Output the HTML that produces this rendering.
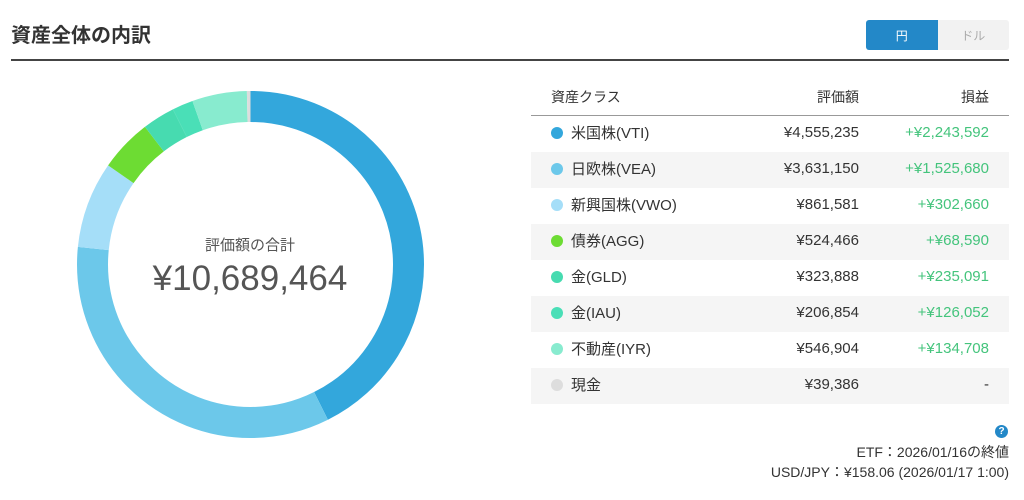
<!DOCTYPE html>
<html><head><meta charset="utf-8"><style>
*{box-sizing:border-box}
body{margin:0;width:1024px;height:500px;background:#fff;font-family:"Liberation Sans","Noto Sans CJK JP",sans-serif;color:#333;position:relative;overflow:hidden}
.t{position:absolute;left:11px;top:19px;font-size:20px;font-weight:bold;color:#333}
.hr{position:absolute;left:11px;top:59px;width:998px;height:2px;background:#444}
.tg{position:absolute;left:866px;top:20px;width:143px;height:30px;display:flex;font-size:12px;border-radius:3px;overflow:hidden}
.tg div{flex:1;display:flex;align-items:center;justify-content:center}
.tb{position:absolute;left:531px;top:80px;width:478px;font-size:15px}
.r{height:36px;display:flex;align-items:center;position:relative}
.r.g{background:#f5f5f5}
.c1{width:180px;padding-left:20px;display:flex;align-items:center}
.c2{width:148px;text-align:right}
.c3{width:130px;text-align:right;color:#44c47c}
.dot{width:12px;height:12px;border-radius:50%;margin-right:8px}
.h{border-bottom:1px solid #999;font-size:14px;height:36px;padding-bottom:2px}
.r:not(.h){padding-bottom:3px}
.ft{position:absolute;right:15px;font-size:14px;color:#333}
</style></head><body>
<div class="t">資産全体の内訳</div>
<div class="tg"><div style="background:#2388c8;color:#fff">円</div><div style="background:#f2f2f2;color:#aaa">ドル</div></div>
<div class="hr"></div>
<svg style="position:absolute;left:0;top:0" width="520" height="500">
<g transform="rotate(-90 250.5 264.5)" fill="none" stroke-width="31">
<circle cx="250.5" cy="264.5" r="158" stroke="#33a7dc" stroke-dasharray="423.1 1000" stroke-dashoffset="0"/>
<circle cx="250.5" cy="264.5" r="158" stroke="#6cc8ea" stroke-dasharray="337.2 1000" stroke-dashoffset="-423.1"/>
<circle cx="250.5" cy="264.5" r="158" stroke="#a5def8" stroke-dasharray="80 1000" stroke-dashoffset="-760.3"/>
<circle cx="250.5" cy="264.5" r="158" stroke="#6ddc33" stroke-dasharray="48.7 1000" stroke-dashoffset="-840.3"/>
<circle cx="250.5" cy="264.5" r="158" stroke="#47dbb0" stroke-dasharray="30.1 1000" stroke-dashoffset="-889"/>
<circle cx="250.5" cy="264.5" r="158" stroke="#4adfb7" stroke-dasharray="19.3 1000" stroke-dashoffset="-919.1"/>
<circle cx="250.5" cy="264.5" r="158" stroke="#88ebcf" stroke-dasharray="50.6 1000" stroke-dashoffset="-938.4"/>
<circle cx="250.5" cy="264.5" r="158" stroke="#dddddd" stroke-dasharray="3.7 1000" stroke-dashoffset="-989"/>
</g>
<text x="250" y="250" text-anchor="middle" font-size="15" fill="#555" font-family="Liberation Sans,Noto Sans CJK JP,sans-serif">評価額の合計</text>
<text x="250" y="290" text-anchor="middle" font-size="35" fill="#555" font-family="Liberation Sans,Noto Sans CJK JP,sans-serif">¥10,689,464</text>
</svg>
<div class="tb">
<div class="r h"><div class="c1">資産クラス</div><div class="c2">評価額</div><div class="c3" style="color:#333">損益</div></div>
<div class="r"><div class="c1"><span class="dot" style="background:#33a7dc"></span>米国株(VTI)</div><div class="c2">¥4,555,235</div><div class="c3">+¥2,243,592</div></div>
<div class="r g"><div class="c1"><span class="dot" style="background:#6cc8ea"></span>日欧株(VEA)</div><div class="c2">¥3,631,150</div><div class="c3">+¥1,525,680</div></div>
<div class="r"><div class="c1"><span class="dot" style="background:#a5def8"></span>新興国株(VWO)</div><div class="c2">¥861,581</div><div class="c3">+¥302,660</div></div>
<div class="r g"><div class="c1"><span class="dot" style="background:#6ddc33"></span>債券(AGG)</div><div class="c2">¥524,466</div><div class="c3">+¥68,590</div></div>
<div class="r"><div class="c1"><span class="dot" style="background:#47dbb0"></span>金(GLD)</div><div class="c2">¥323,888</div><div class="c3">+¥235,091</div></div>
<div class="r g"><div class="c1"><span class="dot" style="background:#4adfb7"></span>金(IAU)</div><div class="c2">¥206,854</div><div class="c3">+¥126,052</div></div>
<div class="r"><div class="c1"><span class="dot" style="background:#88ebcf"></span>不動産(IYR)</div><div class="c2">¥546,904</div><div class="c3">+¥134,708</div></div>
<div class="r g"><div class="c1"><span class="dot" style="background:#dddddd"></span>現金</div><div class="c2">¥39,386</div><div class="c3" style="color:#333">-</div></div>
</div>
<div style="position:absolute;left:995px;top:425px;width:13px;height:13px;border-radius:50%;background:#2388c8;color:#fff;font-size:10px;font-weight:bold;text-align:center;line-height:13px">?</div>
<div class="ft" style="top:442px">ETF：2026/01/16の終値</div>
<div class="ft" style="top:462px">USD/JPY：¥158.06 (2026/01/17 1:00)</div>
</body></html>
